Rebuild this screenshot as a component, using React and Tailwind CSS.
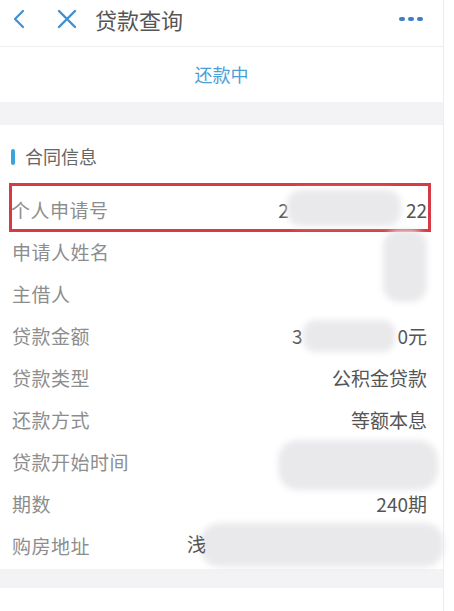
const rows = [
  { label: "个人申请号", head: "2", gap: 117, tail: "22", boxed: true },
  { label: "申请人姓名" },
  { label: "主借人" },
  { label: "贷款金额", head: "3", gap: 95, tail: "0元" },
  { label: "贷款类型", tail: "公积金贷款" },
  { label: "还款方式", tail: "等额本息" },
  { label: "贷款开始时间" },
  { label: "期数", tail: "240期" },
  { label: "购房地址" },
];

function Smudge({ className }) {
  return <div className={`absolute bg-[#e9e9ec] blur-[3px] ${className}`} />;
}

export default function App() {
  return (
    <div
      className="w-[454px] h-[611px] bg-white overflow-hidden flex"
      style={{ fontFamily: '"Noto Sans CJK SC", "Noto Sans", sans-serif' }}
    >
      <div className="w-[444px] flex flex-col border-r border-[#ececf0] relative">
        {/* top bar */}
        <div className="h-[47px] flex items-center pb-[8px] border-b border-[#eeeeee] shrink-0">
          <svg className="ml-[13px] w-[12px] h-[20px]" viewBox="0 0 12 20" fill="none">
            <polyline points="10,2 2,10 10,18" stroke="#3f8fd2" strokeWidth="2.2" strokeLinecap="round" strokeLinejoin="round" />
          </svg>
          <svg className="ml-[32px] w-[20px] h-[20px]" viewBox="0 0 20 20" fill="none">
            <path d="M2 2L18 18M18 2L2 18" stroke="#3f8fd2" strokeWidth="2.4" strokeLinecap="round" />
          </svg>
          <span className="ml-[18px] text-[22px] text-[#555] leading-none">贷款查询</span>
          <div className="ml-auto mr-[20px] flex gap-[3px]">
            <span className="w-[6px] h-[4px] rounded-sm bg-[#3f7fc0]" />
            <span className="w-[6px] h-[4px] rounded-sm bg-[#3f7fc0]" />
            <span className="w-[6px] h-[4px] rounded-sm bg-[#3f7fc0]" />
          </div>
        </div>

        {/* status */}
        <div className="h-[55px] flex items-center justify-center text-[18px] text-[#4b9fd6] shrink-0">
          还款中
        </div>

        <div className="h-[23px] bg-[#f3f3f6] shrink-0" />

        {/* contract */}
        <div className="pt-[18px] h-[45px] flex items-center shrink-0">
          <span className="ml-[11px] w-[4px] h-[16px] rounded-full bg-[#3aa3dc]" />
          <span className="ml-[10px] text-[18px] leading-[27px] text-[#666]">合同信息</span>
        </div>

        <div className="mt-[19px] flex flex-col">
          {rows.map((r) => (
            <div
              key={r.label}
              className="relative h-[42px] ml-[12px] mr-[16px] flex items-center justify-between text-[19px]"
            >
              {r.boxed && (
                <div className="absolute -left-[3px] -right-[4px] -top-[6px] -bottom-[1px] border-[3px] border-[#d63b45]" />
              )}
              <span className={`text-[#8d8d8d] tracking-[0.5px] ${r.boxed ? "-ml-[1px]" : ""}`}>{r.label}</span>
              <span className="flex items-center text-[#555]">
                {r.head && <span>{r.head}</span>}
                {r.gap && <span style={{ width: r.gap }} />}
                {r.tail && <span>{r.tail}</span>}
              </span>
            </div>
          ))}
        </div>

        <div className="mt-[2px] h-[19px] bg-[#f3f3f6] shrink-0" />

        {/* blurred patches */}
        <Smudge className="left-[287px] top-[190px] w-[114px] h-[36px] rounded-[14px]" />
        <Smudge className="left-[383px] top-[230px] w-[44px] h-[72px] rounded-[16px]" />
        <Smudge className="left-[303px] top-[320px] w-[92px] h-[32px] rounded-[12px]" />
        <Smudge className="left-[278px] top-[440px] w-[160px] h-[50px] rounded-[20px]" />
        <Smudge className="left-[200px] top-[523px] w-[244px] h-[44px] rounded-[20px]" />
        <span className="absolute left-[187px] top-[534px] text-[19px] text-[#555] leading-none">浅</span>
      </div>
    </div>
  );
}
